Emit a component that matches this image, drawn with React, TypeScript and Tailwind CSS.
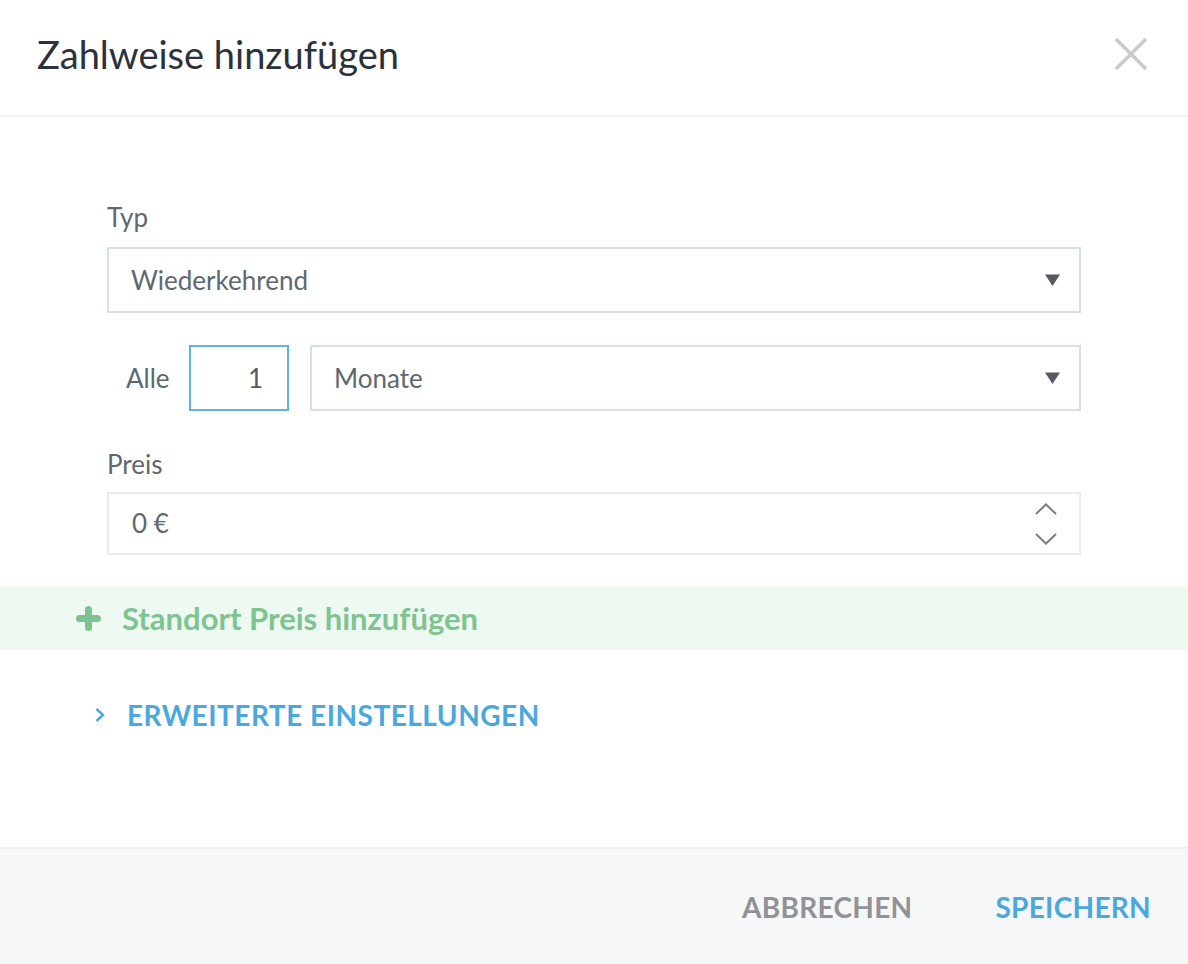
import React from "react";

const Caret = () => (
  <svg width="15" height="12" viewBox="0 0 15 12" className="shrink-0">
    <path d="M0 0.5 H15 L7.5 12 Z" fill="#555b60" />
  </svg>
);

const SelectBox = ({ value, className }: { value: string; className?: string }) => (
  <div
    className={
      "flex items-center justify-between h-[66px] border-2 border-[#d6e0e1] bg-white pl-[22px] pr-[19px] " +
      (className ?? "")
    }
  >
    <span className="text-[26px] text-[#5d6870]">{value}</span>
    <Caret />
  </div>
);

export default function App() {
  return (
    <div
      className="w-[1188px] h-[964px] bg-white flex flex-col overflow-hidden"
      style={{ fontFamily: "Lato, 'Open Sans', sans-serif" }}
    >
      {/* header */}
      <div className="h-[117px] shrink-0 flex items-center justify-between pl-[37px] pr-[40px] border-b-2 border-[#f2f3f4]">
        <h1 className="text-[38px] text-[#2b323b] pb-[6px]">Zahlweise hinzufügen</h1>
        <svg width="34" height="34" viewBox="0 0 34 34" className="mb-[8px]">
          <path d="M2 2 L32 32 M32 2 L2 32" stroke="#cbcbcb" strokeWidth="3.6" />
        </svg>
      </div>

      {/* body */}
      <div className="flex-1 flex flex-col">
        <div className="px-[107px] pt-[85px]">
          <label className="block text-[26px] leading-[30px] text-[#5d6870]">Typ</label>
          <SelectBox value="Wiederkehrend" className="mt-[15px]" />

          <div className="flex items-center mt-[32px] h-[66px]">
            <span className="text-[26px] text-[#5d6870] pl-[19px] w-[82px]">Alle</span>
            <div className="w-[100px] h-[66px] border-2 border-[#5cb4df] flex items-center justify-end pr-[24px] text-[26px] text-[#555b60]">
              1
            </div>
            <SelectBox value="Monate" className="flex-1 ml-[21px]" />
          </div>

          <label className="block mt-[38px] text-[26px] leading-[30px] text-[#5d6870]">Preis</label>
          <div className="mt-[13px] h-[63px] border-2 border-[#ebebeb] flex items-center justify-between pl-[23px] pr-[22px]">
            <span className="text-[26px] text-[#5d6870]">0 €</span>
            <div className="flex flex-col gap-[18px]">
              <svg width="22" height="12" viewBox="0 0 22 12">
                <path d="M1 11 L11 1.5 L21 11" fill="none" stroke="#7a7f83" strokeWidth="2" />
              </svg>
              <svg width="22" height="12" viewBox="0 0 22 12">
                <path d="M1 1 L11 10.5 L21 1" fill="none" stroke="#7a7f83" strokeWidth="2" />
              </svg>
            </div>
          </div>
        </div>

        <div className="mt-[31px] h-[64px] bg-[#eef9f1] flex items-center pl-[76px]">
          <svg width="25" height="25" viewBox="0 0 25 25">
            <path d="M12.5 3.5 V21.5 M3.5 12.5 H21.5" stroke="#7bc48f" strokeWidth="7" strokeLinecap="round" />
          </svg>
          <span className="ml-[21px] text-[31px] font-bold text-[#7dc490]">Standort Preis hinzufügen</span>
        </div>

        <div className="mt-[44px] flex items-center pl-[94px]">
          <svg width="12" height="16" viewBox="0 0 12 16">
            <path d="M2.5 2 L9 8 L2.5 14" fill="none" stroke="#4aa8de" strokeWidth="2.4" />
          </svg>
          <span className="ml-[21px] text-[28px] font-bold tracking-[0.5px] text-[#4aa8de]">
            ERWEITERTE EINSTELLUNGEN
          </span>
        </div>
      </div>

      {/* footer */}
      <div className="h-[117px] shrink-0 bg-[#f6f7f9] border-t-2 border-[#f0f1f3] flex items-center justify-end pr-[37px] gap-[83px]">
        <button className="text-[28px] font-bold text-[#909297] tracking-[0.3px]">ABBRECHEN</button>
        <button className="text-[28px] font-bold text-[#4aa8de] tracking-[0.3px]">SPEICHERN</button>
      </div>
    </div>
  );
}
